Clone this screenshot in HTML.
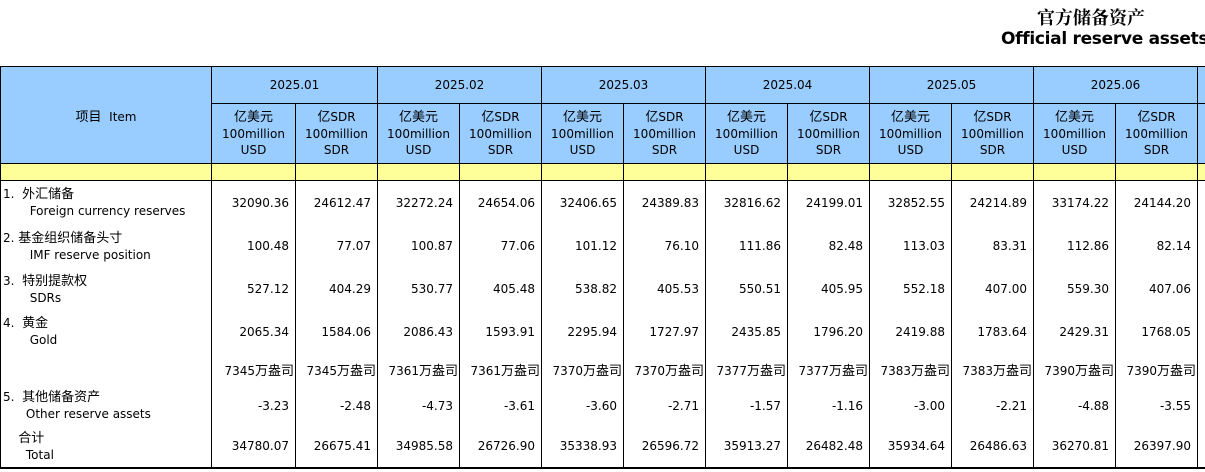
<!DOCTYPE html>
<html><head><meta charset="utf-8"><style>
body{margin:0;background:#fff;width:1205px;height:472px;overflow:hidden;position:relative;font-family:"DejaVu Sans","Noto Sans CJK SC",sans-serif;}
.t1{position:absolute;left:1037px;top:4px;font-family:"Noto Serif CJK SC","Noto Sans CJK SC",serif;font-weight:bold;font-size:18px;color:#000;white-space:nowrap}
.t2{position:absolute;left:1001px;top:29px;font-family:"DejaVu Sans",sans-serif;font-weight:bold;font-size:17px;white-space:nowrap;letter-spacing:-0.3px}
table{position:absolute;left:0;top:66px;border-collapse:collapse;table-layout:fixed;width:1260px;font-size:12px;}
td{border-left:1px solid #000;border-right:1px solid #000;padding:0;overflow:hidden;white-space:nowrap}
.h td{background:#99ccff;text-align:center;border:1px solid #000}
.y td{background:#ffff99;border-left:1px solid #000;border-right:1px solid #000;border-bottom:1px solid #000}
.n{text-align:right;padding-right:6px}
.it{padding-left:2px;line-height:16px}
.top{border-top:2px solid #000}
.last td{border-bottom:2px solid #000}
.c{font-size:13px}
</style></head><body>
<div class="t1">官方储备资产</div>
<div class="t2">Official reserve assets</div>
<table>
<colgroup><col style="width:211px"><col style="width:84px"><col style="width:82px"><col style="width:82px"><col style="width:82px"><col style="width:82px"><col style="width:82px"><col style="width:82px"><col style="width:82px"><col style="width:82px"><col style="width:82px"><col style="width:82px"><col style="width:82px"><col style="width:80px"></colgroup>
<tr class="h" style="height:37px"><td rowspan="2" class="top" style="text-align:center"><span class="c">项目</span>&nbsp; Item</td><td colspan="2" class="top">2025.01</td><td colspan="2" class="top">2025.02</td><td colspan="2" class="top">2025.03</td><td colspan="2" class="top">2025.04</td><td colspan="2" class="top">2025.05</td><td colspan="2" class="top">2025.06</td><td class="top"></td></tr>
<tr class="h" style="height:60px;line-height:16px">
<td><span class="c">亿美元</span><br>100million<br>USD</td><td><span class="c">亿</span>SDR<br>100million<br>SDR</td>
<td><span class="c">亿美元</span><br>100million<br>USD</td><td><span class="c">亿</span>SDR<br>100million<br>SDR</td>
<td><span class="c">亿美元</span><br>100million<br>USD</td><td><span class="c">亿</span>SDR<br>100million<br>SDR</td>
<td><span class="c">亿美元</span><br>100million<br>USD</td><td><span class="c">亿</span>SDR<br>100million<br>SDR</td>
<td><span class="c">亿美元</span><br>100million<br>USD</td><td><span class="c">亿</span>SDR<br>100million<br>SDR</td>
<td><span class="c">亿美元</span><br>100million<br>USD</td><td><span class="c">亿</span>SDR<br>100million<br>SDR</td><td></td></tr>
<tr class="y" style="height:17px"><td></td><td></td><td></td><td></td><td></td><td></td><td></td><td></td><td></td><td></td><td></td><td></td><td></td><td></td></tr>
<tr style="height:44px"><td class="it">1.&nbsp; <span class="c">外汇储备</span><br>&nbsp;&nbsp;&nbsp;&nbsp;&nbsp;&nbsp;&nbsp;Foreign currency reserves</td><td class="n">32090.36</td><td class="n">24612.47</td><td class="n">32272.24</td><td class="n">24654.06</td><td class="n">32406.65</td><td class="n">24389.83</td><td class="n">32816.62</td><td class="n">24199.01</td><td class="n">32852.55</td><td class="n">24214.89</td><td class="n">33174.22</td><td class="n">24144.20</td><td></td></tr>
<tr style="height:43px"><td class="it">2. <span class="c">基金组织储备头寸</span><br>&nbsp;&nbsp;&nbsp;&nbsp;&nbsp;&nbsp;&nbsp;IMF reserve position</td><td class="n">100.48</td><td class="n">77.07</td><td class="n">100.87</td><td class="n">77.06</td><td class="n">101.12</td><td class="n">76.10</td><td class="n">111.86</td><td class="n">82.48</td><td class="n">113.03</td><td class="n">83.31</td><td class="n">112.86</td><td class="n">82.14</td><td></td></tr>
<tr style="height:43px"><td class="it">3.&nbsp; <span class="c">特别提款权</span><br>&nbsp;&nbsp;&nbsp;&nbsp;&nbsp;&nbsp;&nbsp;SDRs</td><td class="n">527.12</td><td class="n">404.29</td><td class="n">530.77</td><td class="n">405.48</td><td class="n">538.82</td><td class="n">405.53</td><td class="n">550.51</td><td class="n">405.95</td><td class="n">552.18</td><td class="n">407.00</td><td class="n">559.30</td><td class="n">407.06</td><td></td></tr>
<tr style="height:42px"><td class="it">4.&nbsp; <span class="c">黄金</span><br>&nbsp;&nbsp;&nbsp;&nbsp;&nbsp;&nbsp;&nbsp;Gold</td><td class="n">2065.34</td><td class="n">1584.06</td><td class="n">2086.43</td><td class="n">1593.91</td><td class="n">2295.94</td><td class="n">1727.97</td><td class="n">2435.85</td><td class="n">1796.20</td><td class="n">2419.88</td><td class="n">1783.64</td><td class="n">2429.31</td><td class="n">1768.05</td><td></td></tr>
<tr style="height:33px"><td></td><td class="n" style="padding-right:1px">7345<span class="c">万盎司</span></td><td class="n" style="padding-right:1px">7345<span class="c">万盎司</span></td><td class="n" style="padding-right:1px">7361<span class="c">万盎司</span></td><td class="n" style="padding-right:1px">7361<span class="c">万盎司</span></td><td class="n" style="padding-right:1px">7370<span class="c">万盎司</span></td><td class="n" style="padding-right:1px">7370<span class="c">万盎司</span></td><td class="n" style="padding-right:1px">7377<span class="c">万盎司</span></td><td class="n" style="padding-right:1px">7377<span class="c">万盎司</span></td><td class="n" style="padding-right:1px">7383<span class="c">万盎司</span></td><td class="n" style="padding-right:1px">7383<span class="c">万盎司</span></td><td class="n" style="padding-right:1px">7390<span class="c">万盎司</span></td><td class="n" style="padding-right:1px">7390<span class="c">万盎司</span></td><td></td></tr>
<tr style="height:40px"><td class="it">5.&nbsp; <span class="c">其他储备资产</span><br>&nbsp;&nbsp;&nbsp;&nbsp;&nbsp;&nbsp;Other reserve assets</td><td class="n">-3.23</td><td class="n">-2.48</td><td class="n">-4.73</td><td class="n">-3.61</td><td class="n">-3.60</td><td class="n">-2.71</td><td class="n">-1.57</td><td class="n">-1.16</td><td class="n">-3.00</td><td class="n">-2.21</td><td class="n">-4.88</td><td class="n">-3.55</td><td></td></tr>
<tr class="last" style="height:42px"><td class="it">&nbsp;&nbsp;&nbsp;&nbsp;<span class="c">合计</span><br>&nbsp;&nbsp;&nbsp;&nbsp;&nbsp;&nbsp;Total</td><td class="n">34780.07</td><td class="n">26675.41</td><td class="n">34985.58</td><td class="n">26726.90</td><td class="n">35338.93</td><td class="n">26596.72</td><td class="n">35913.27</td><td class="n">26482.48</td><td class="n">35934.64</td><td class="n">26486.63</td><td class="n">36270.81</td><td class="n">26397.90</td><td></td></tr>
</table>
</body></html>
